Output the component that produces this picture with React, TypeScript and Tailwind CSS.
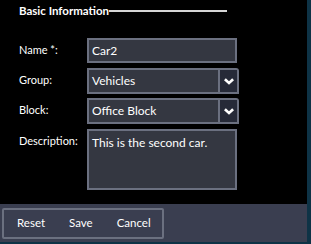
import React from "react";

const FONT = "font-['Lato','Open_Sans',sans-serif]";

function Chevron() {
  return (
    <svg viewBox="0 0 11 7" className="h-[7px] w-[10px]" fill="none">
      <path d="M0 2 2 0 5.5 3.3 9 0 11 2 5.5 7Z" fill="#ffffff" />
    </svg>
  );
}

function Row({ label, children }: { label: string; children: React.ReactNode }) {
  return (
    <div className="flex items-start">
      <div className="w-[68px] shrink-0 pt-[4px] text-[11px] text-white">{label}</div>
      {children}
    </div>
  );
}

function TextBox({ value }: { value: string }) {
  return (
    <div className="flex h-[25px] w-[150px] items-center border-2 border-[#6b7080] bg-[#343741] px-[3px] text-[12px] text-white">
      {value}
    </div>
  );
}

function Select({ value }: { value: string }) {
  return (
    <div className="flex h-[26px] w-[152px] rounded-tr-[3px] border-2 border-[#6b7080] bg-[#343741] text-[12px] text-white">
      <div className="flex flex-1 items-center px-[3px]">{value}</div>
      <div className="grid w-[19px] place-items-center border-l-2 border-[#6b7080] bg-[#262a38]">
        <Chevron />
      </div>
    </div>
  );
}

export default function App() {
  return (
    <div className={`flex h-[244px] w-[311px] bg-black ${FONT}`}>
      <div className="flex w-[307px] flex-col border-b-2 border-[#0e3346]">
        <div className="flex-1 pl-[19px]">
          {/* section heading */}
          <div className="flex h-[22px] items-center">
            <span className="text-[11.5px] font-bold text-white">Basic Information</span>
            <div className="h-[2px] w-[118px] bg-[#d6d6d6]" />
          </div>

          <div className="mt-[16px] flex flex-col gap-[5px]">
            <Row label="Name *:">
              <TextBox value="Car2" />
            </Row>
            <Row label="Group:">
              <Select value="Vehicles" />
            </Row>
            <div className="-mt-[1px]">
              <Row label="Block:">
                <Select value="Office Block" />
              </Row>
            </div>
            <Row label="Description:">
              <div className="h-[61px] w-[150px] border-2 border-[#6b7080] bg-[#343741] px-[3px] pt-[3px] text-[12px] text-white">
                This is the second car.
              </div>
            </Row>
          </div>
        </div>

        {/* footer */}
        <div className="flex h-[38px] items-center bg-[#3a3e50] px-[2px]">
          <div className="flex h-[31px] w-[162px] items-center rounded-[2px] border-2 border-[#6b7080] text-[11.5px] text-white">
            <span className="ml-[13px]">Reset</span>
            <span className="ml-[24px]">Save</span>
            <span className="ml-[24px]">Cancel</span>
          </div>
        </div>
      </div>
      <div className="w-[4px] bg-[#0e3346]" />
    </div>
  );
}
